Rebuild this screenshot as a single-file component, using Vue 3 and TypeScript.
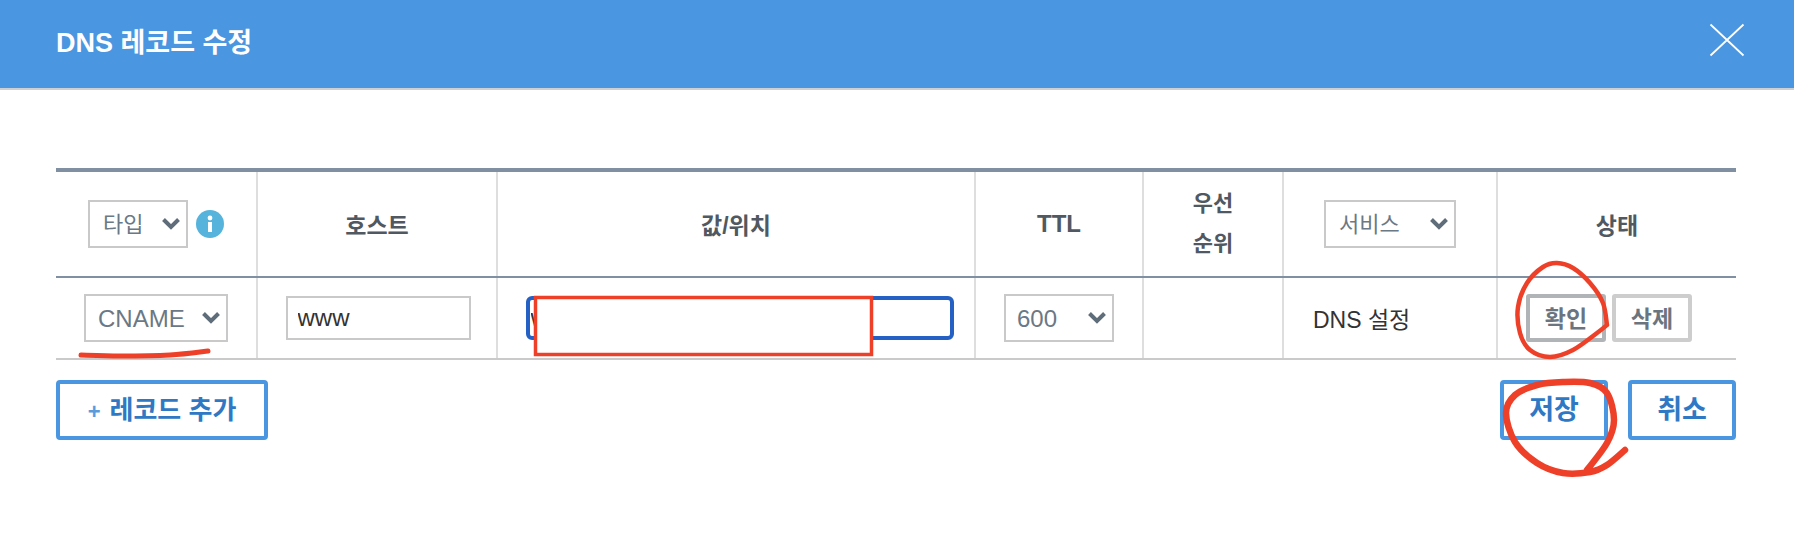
<script setup lang="ts">
type Pt = [number, number]

// catmull-rom through the hand-drawn pen points
const smooth = (pts: Pt[]): string => {
  let d = `M${pts[0][0]} ${pts[0][1]}`
  for (let i = 0; i < pts.length - 1; i++) {
    const p0 = pts[i - 1] || pts[i]
    const p1 = pts[i]
    const p2 = pts[i + 1]
    const p3 = pts[i + 2] || p2
    const c1x = p1[0] + (p2[0] - p0[0]) / 6
    const c1y = p1[1] + (p2[1] - p0[1]) / 6
    const c2x = p2[0] - (p3[0] - p1[0]) / 6
    const c2y = p2[1] - (p3[1] - p1[1]) / 6
    d += ` C${c1x.toFixed(1)} ${c1y.toFixed(1)} ${c2x.toFixed(1)} ${c2y.toFixed(1)} ${p2[0]} ${p2[1]}`
  }
  return d
}

const confirmCircle = smooth([
  [1607, 325], [1597, 333], [1573, 350], [1550, 357], [1530, 350], [1520, 333], [1518, 307],
  [1527, 283], [1543, 267], [1557, 263], [1573, 268], [1590, 283], [1603, 303], [1607, 325],
])
const saveCircle = smooth([
  [1625, 450], [1607, 465], [1590, 472], [1563, 473], [1537, 463], [1515, 442], [1506, 413],
  [1515, 395], [1537, 385], [1563, 382], [1590, 383], [1607, 393], [1614, 420], [1607, 443], [1587, 470],
])
const underline = smooth([[81, 355], [120, 356], [170, 355], [208, 351]])
</script>

<template>
  <div class="modal">
    <header class="modal-header">
      <h1 class="modal-title">DNS 레코드 수정</h1>
      <button class="close-btn" aria-label="닫기">
        <svg width="36" height="36" viewBox="0 0 36 36">
          <path d="M1.5 2.5 L34.5 33.5 M34.5 2.5 L1.5 33.5" stroke="#fff" stroke-width="1.8" fill="none" />
        </svg>
      </button>
    </header>

    <div class="modal-body">
      <table class="record-table">
        <colgroup>
          <col style="width: 201px" />
          <col style="width: 240px" />
          <col style="width: 478px" />
          <col style="width: 168px" />
          <col style="width: 140px" />
          <col style="width: 214px" />
          <col style="width: 239px" />
        </colgroup>
        <thead>
          <tr>
            <th>
              <div class="cell-center">
                <div class="select-wrap type-filter">
                  <select><option>타입</option></select>
                  <svg class="chevron" viewBox="0 0 20 14"><path d="M2.5 2.5 L10 10 L17.5 2.5" /></svg>
                </div>
                <svg class="info-icon" width="28" height="28" viewBox="0 0 28 28">
                  <circle cx="14" cy="14" r="14" fill="#55b3dc" />
                  <circle cx="14" cy="8" r="2.4" fill="#fff" />
                  <rect x="12" y="12" width="4" height="10" fill="#fff" />
                </svg>
              </div>
            </th>
            <th>호스트</th>
            <th>값/위치</th>
            <th class="ttl">TTL</th>
            <th class="priority">우선<br />순위</th>
            <th>
              <div class="cell-center">
                <div class="select-wrap service-filter">
                  <select><option>서비스</option></select>
                  <svg class="chevron" viewBox="0 0 20 14"><path d="M2.5 2.5 L10 10 L17.5 2.5" /></svg>
                </div>
              </div>
            </th>
            <th>상태</th>
          </tr>
        </thead>
        <tbody>
          <tr>
            <td>
              <div class="cell-center">
                <div class="select-wrap type-select">
                  <select><option>CNAME</option></select>
                  <svg class="chevron" viewBox="0 0 20 14"><path d="M2.5 2.5 L10 10 L17.5 2.5" /></svg>
                </div>
              </div>
            </td>
            <td>
              <div class="cell-center host-cell">
                <input class="text-input host-input" value="www" />
              </div>
            </td>
            <td>
              <div class="cell-center value-cell">
                <input class="text-input value-input" value="www" />
              </div>
            </td>
            <td>
              <div class="cell-center">
                <div class="select-wrap ttl-select">
                  <select><option>600</option></select>
                  <svg class="chevron" viewBox="0 0 20 14"><path d="M2.5 2.5 L10 10 L17.5 2.5" /></svg>
                </div>
              </div>
            </td>
            <td></td>
            <td class="service-name">DNS 설정</td>
            <td>
              <div class="status-actions">
                <button class="row-btn hover">확인</button>
                <button class="row-btn">삭제</button>
              </div>
            </td>
          </tr>
        </tbody>
      </table>

      <div class="footer-actions">
        <button class="outline-btn add-btn"><span class="plus">+</span>레코드 추가</button>
        <div class="footer-right">
          <button class="outline-btn">저장</button>
          <button class="outline-btn">취소</button>
        </div>
      </div>
    </div>

    <!-- pen marks drawn over the screenshot -->
    <svg class="annotations" width="1794" height="536" viewBox="0 0 1794 536">
      <rect x="535.5" y="297.5" width="336" height="57" fill="#fff" stroke="#ee4028" stroke-width="3.5" />
      <path :d="underline" class="pen underline" />
      <path :d="confirmCircle" class="pen" />
      <path :d="saveCircle" class="pen thick" />
    </svg>
  </div>
</template>

<style>
html,
body {
  background: #fff;
}
</style>

<style scoped>
.modal {
  position: relative;
  width: 1794px;
  height: 536px;
  overflow: hidden;
  background: #fff;
  font-family: "Liberation Sans", "Noto Sans CJK KR", sans-serif;
}

.modal-header {
  display: flex;
  align-items: center;
  justify-content: space-between;
  box-sizing: border-box;
  height: 90px;
  padding: 0 49px 8px 56px;
  background: #4a96e0;
  border-bottom: 2px solid #cdd0d2;
}

.modal-title {
  margin: 0;
  font-size: 27px;
  font-weight: 700;
  color: #fff;
}

.close-btn {
  display: flex;
  padding: 0;
  border: none;
  background: none;
}

.modal-body {
  padding: 78px 58px 0 56px;
}

.record-table {
  width: 1680px;
  table-layout: fixed;
  border-collapse: collapse;
  border-top: 4px solid #8090a2;
}

.record-table th {
  box-sizing: border-box;
  height: 107px;
  padding: 0;
  font-size: 23px;
  font-weight: 700;
  color: #505862;
  border-bottom: 2px solid #8090a2;
  border-left: 2px solid #dedede;
}

.record-table td {
  box-sizing: border-box;
  height: 82px;
  padding: 0;
  border-bottom: 2px solid #cacaca;
  border-left: 2px solid #dedede;
}

.record-table th:first-child,
.record-table td:first-child {
  border-left: none;
}

.record-table .ttl {
  font-size: 24px;
}

.record-table .priority {
  font-size: 22px;
  line-height: 40px;
}

.cell-center {
  display: flex;
  align-items: center;
  justify-content: center;
  gap: 8px;
}

.host-cell {
  padding-left: 2px;
}

.value-cell {
  padding-left: 7px;
}

.select-wrap {
  position: relative;
  height: 48px;
}

.select-wrap select {
  box-sizing: border-box;
  width: 100%;
  height: 100%;
  padding: 0 0 0 12px;
  border: 2px solid #c9c9c9;
  border-radius: 0;
  background: #fff;
  color: #6b7885;
  font-family: inherit;
  font-size: 24px;
  appearance: none;
}

.type-filter {
  width: 100px;
}

.type-filter select,
.service-filter select {
  padding-left: 13px;
  font-size: 22px;
}

.service-filter {
  width: 132px;
}

.type-select {
  width: 144px;
}

.ttl-select {
  width: 110px;
}

.ttl-select select {
  padding-left: 11px;
}

.chevron {
  position: absolute;
  top: 17px;
  right: 7px;
  width: 20px;
  height: 14px;
  fill: none;
  stroke: #5f6c7a;
  stroke-width: 4;
}

.info-icon {
  flex: none;
}

.text-input {
  box-sizing: border-box;
  height: 44px;
  font-family: inherit;
  font-size: 24px;
  color: #333;
  background: #fff;
  outline: none;
}

.host-input {
  width: 185px;
  padding: 0 10px;
  border: 2px solid #c9c9c9;
}

.value-input {
  width: 428px;
  padding: 0 1px;
  border: 4px solid #2560c4;
  border-radius: 6px;
}

.service-name {
  padding-left: 29px !important;
  font-size: 23px;
  color: #333;
}

.status-actions {
  display: flex;
  gap: 6px;
  padding-left: 28px;
}

.row-btn {
  box-sizing: border-box;
  width: 80px;
  height: 48px;
  padding: 0 0 2px;
  border: 4px solid #cdcdcd;
  border-radius: 3px;
  background: #fff;
  color: #6b7580;
  font-family: inherit;
  font-size: 23px;
  font-weight: 700;
}

.row-btn.hover {
  border-color: #b0b4b6;
}

.footer-actions {
  display: flex;
  justify-content: space-between;
  margin-top: 20px;
}

.footer-right {
  display: flex;
  gap: 20px;
}

.outline-btn {
  box-sizing: border-box;
  width: 108px;
  height: 60px;
  padding: 0 0 6px;
  border: 4px solid #4a96e0;
  border-radius: 4px;
  background: #fff;
  color: #2f78c4;
  font-family: inherit;
  font-size: 27px;
  font-weight: 700;
}

.add-btn {
  width: 212px;
  font-size: 26px;
}

.plus {
  margin-right: 9px;
  color: #5a9bdc;
  font-size: 22px;
}

.annotations {
  position: absolute;
  top: 0;
  left: 0;
  pointer-events: none;
}

.pen {
  fill: none;
  stroke: #ee4028;
  stroke-width: 4.5;
  stroke-linecap: round;
  stroke-linejoin: round;
}

.pen.underline {
  stroke-width: 5;
}

.pen.thick {
  stroke-width: 6.5;
}
</style>
